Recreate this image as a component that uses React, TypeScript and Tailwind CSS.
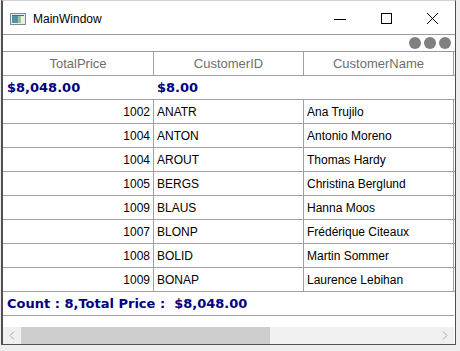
import React from 'react';

const rows = [
  { price: '1002', id: 'ANATR', name: 'Ana Trujilo' },
  { price: '1004', id: 'ANTON', name: 'Antonio Moreno' },
  { price: '1004', id: 'AROUT', name: 'Thomas Hardy' },
  { price: '1005', id: 'BERGS', name: 'Christina Berglund' },
  { price: '1009', id: 'BLAUS', name: 'Hanna Moos' },
  { price: '1007', id: 'BLONP', name: 'Frédérique Citeaux' },
  { price: '1008', id: 'BOLID', name: 'Martin Sommer' },
  { price: '1009', id: 'BONAP', name: 'Laurence Lebihan' },
];

const App: React.FC = () => {
  return (
    <div className="w-[460px] h-[351px] bg-[#eeeeee] font-['Liberation_Sans',sans-serif] overflow-hidden">
      <div className="ml-[1px] w-[455px] h-[345px] bg-white border-l-2 border-r border-b border-t border-l-[#505050] border-r-[#505050] border-b-[#505050] border-t-[#cfcfcf] flex flex-col">
        {/* title bar */}
        <div className="h-[34px] shrink-0 border-b border-[#9a9a9a] flex items-center pl-[7px] pt-[3px]">
          <svg width="16" height="12" viewBox="0 0 16 12" className="mr-[7px]">
            <rect x="0.5" y="0.5" width="15" height="11" fill="#e8eef2" stroke="#7d8a96" />
            <rect x="2" y="3" width="6" height="7" fill="#5a8fa8" />
            <rect x="8" y="3" width="3" height="7" fill="#9cc4a0" />
            <rect x="2" y="2" width="12" height="1" fill="#4a6a82" />
          </svg>
          <span className="text-[12px] text-black">MainWindow</span>
          <div className="ml-auto flex items-center">
            <svg width="46" height="30" viewBox="0 0 46 30">
              <line x1="17" y1="15.5" x2="29" y2="15.5" stroke="#000" strokeWidth="1" />
            </svg>
            <svg width="46" height="30" viewBox="0 0 46 30">
              <rect x="18.5" y="9.5" width="10" height="10" fill="none" stroke="#000" strokeWidth="1" />
            </svg>
            <svg width="46" height="30" viewBox="0 0 46 30">
              <path d="M18 9 L29 20 M29 9 L18 20" stroke="#000" strokeWidth="1" />
            </svg>
          </div>
        </div>

        {/* toolbar with dots */}
        <div className="h-[17px] shrink-0 border-b border-[#9a9a9a] flex items-center justify-end gap-[3px] pr-[4px]">
          <span className="w-[12px] h-[12px] rounded-full bg-[#808080]" />
          <span className="w-[12px] h-[12px] rounded-full bg-[#808080]" />
          <span className="w-[12px] h-[12px] rounded-full bg-[#808080]" />
        </div>

        {/* header */}
        <div className="grid grid-cols-[151px_150px_150px] h-[24px] shrink-0 border-b border-[#a0a0a0] text-[13px] text-[#6e6e6e]">
          <div className="border-r border-[#a0a0a0] flex items-center justify-center">TotalPrice</div>
          <div className="border-r border-[#a0a0a0] flex items-center justify-center">CustomerID</div>
          <div className="border-r border-[#a0a0a0] flex items-center justify-center">CustomerName</div>
        </div>

        {/* caption summary */}
        <div className="grid grid-cols-[151px_150px_150px] h-[24px] shrink-0 border-b border-[#a0a0a0] font-['DejaVu_Sans',sans-serif] font-bold text-[13px] text-[#000080]">
          <div className="flex items-center pl-[4px]">$8,048.00</div>
          <div className="flex items-center pl-[3px]">$8.00</div>
          <div />
        </div>

        {/* data rows */}
        {rows.map((r, i) => (
          <div key={i} className="grid grid-cols-[151px_150px_150px] h-[24px] shrink-0 border-b border-[#a0a0a0] text-[12px] text-black">
            <div className="border-r border-[#a0a0a0] flex items-center justify-end pr-[3px]">{r.price}</div>
            <div className="border-r border-[#a0a0a0] flex items-center pl-[3px]">{r.id}</div>
            <div className="border-r border-[#a0a0a0] flex items-center pl-[3px]">{r.name}</div>
          </div>
        ))}

        {/* table summary */}
        <div className="h-[24px] shrink-0 border-b border-[#a0a0a0] w-[451px] flex items-center pl-[4px] font-['DejaVu_Sans',sans-serif] font-bold text-[13px] text-[#000080] whitespace-pre">
          {'Count : 8,Total Price :  $8,048.00'}
        </div>

        <div className="h-[11px] shrink-0" />

        {/* horizontal scrollbar */}
        <div className="h-[17px] shrink-0 w-[451px] bg-[#f0f0f0] flex items-stretch">
          <div className="w-[18px] flex items-center justify-center">
            <svg width="6" height="9" viewBox="0 0 6 9">
              <path d="M5 0.5 L1 4.5 L5 8.5" fill="none" stroke="#a6a6a6" strokeWidth="1" />
            </svg>
          </div>
          <div className="w-[249px] bg-[#cdcdcd]" />
          <div className="flex-1" />
          <div className="w-[18px] flex items-center justify-center">
            <svg width="6" height="9" viewBox="0 0 6 9">
              <path d="M1 0.5 L5 4.5 L1 8.5" fill="none" stroke="#a6a6a6" strokeWidth="1" />
            </svg>
          </div>
        </div>
      </div>
    </div>
  );
};

export default App;
